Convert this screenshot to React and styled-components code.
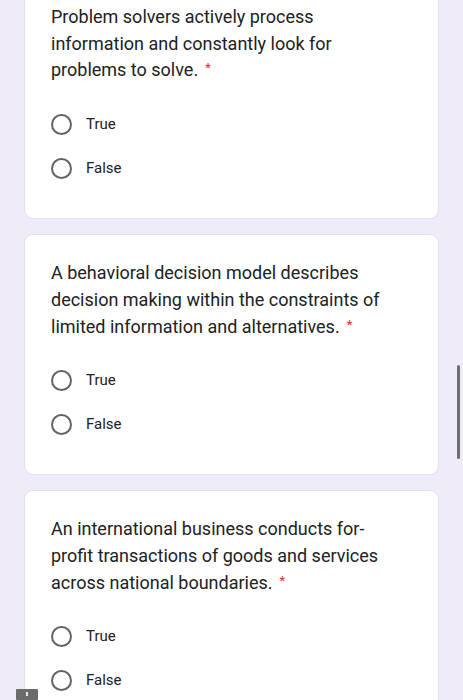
import React from "react";
import styled, { createGlobalStyle } from "styled-components";

const Global = createGlobalStyle`
  html, body { margin: 0; padding: 0; background: #f0ebf8; overflow: hidden; }
  body { font-family: Roboto, "Liberation Sans", sans-serif; }
`;

const Page = styled.div`
  width: 463px;
  height: 700px;
  overflow: hidden;
  position: relative;
  background: #f0ebf8;
`;

const List = styled.div`
  display: flex;
  flex-direction: column;
  gap: 15px;
  padding: 0 24px;
  margin-top: -22px;
`;

const Card = styled.div`
  background: #fff;
  border: 1px solid #e3e0ea;
  border-radius: 9px;
  padding: 25px 26px 40px 26px;
`;

const Question = styled.div`
  font-size: 18px;
  line-height: 26.7px;
  color: #202124;
  max-width: 352px;
`;

const Star = styled.span`
  display: inline-block;
  color: #d93025;
  font-size: 13px;
  line-height: 1;
  margin-left: 7px;
  vertical-align: 4px;
`;

const Options = styled.div`
  display: flex;
  flex-direction: column;
  gap: 24px;
  margin-top: 30px;
`;

const Option = styled.label`
  display: flex;
  align-items: center;
  gap: 14px;
  height: 20px;
`;

const Radio = styled.span`
  width: 17px;
  height: 17px;
  border: 2px solid #5f6368;
  border-radius: 50%;
  flex: none;
`;

const Label = styled.span`
  font-size: 15px;
  color: #202124;
`;

const Scrollbar = styled.div`
  position: absolute;
  right: 3px;
  top: 365px;
  width: 3px;
  height: 94px;
  border-radius: 2px;
  background: #6f6f6f;
`;

const Badge = styled.div`
  position: absolute;
  left: 16px;
  bottom: 0;
  width: 22px;
  height: 11px;
  background: #6b6b6b;
  border-radius: 1px;
  display: flex;
  justify-content: center;
  padding-top: 3px;
  box-sizing: border-box;
  &::after {
    content: "";
    width: 2px;
    height: 4px;
    background: #e8e8e8;
  }
`;

const questions = [
  "Problem solvers actively process information and constantly look for problems to solve.",
  "A behavioral decision model describes decision making within the constraints of limited information and alternatives.",
  "An international business conducts for-profit transactions of goods and services across national boundaries.",
];

export default function App() {
  return (
    <Page>
      <Global />
      <List>
        {questions.map((q, i) => (
          <Card key={i}>
            <Question>
              {q}
              <Star>*</Star>
            </Question>
            <Options>
              {["True", "False"].map((o) => (
                <Option key={o}>
                  <Radio />
                  <Label>{o}</Label>
                </Option>
              ))}
            </Options>
          </Card>
        ))}
      </List>
      <Scrollbar />
      <Badge />
    </Page>
  );
}
